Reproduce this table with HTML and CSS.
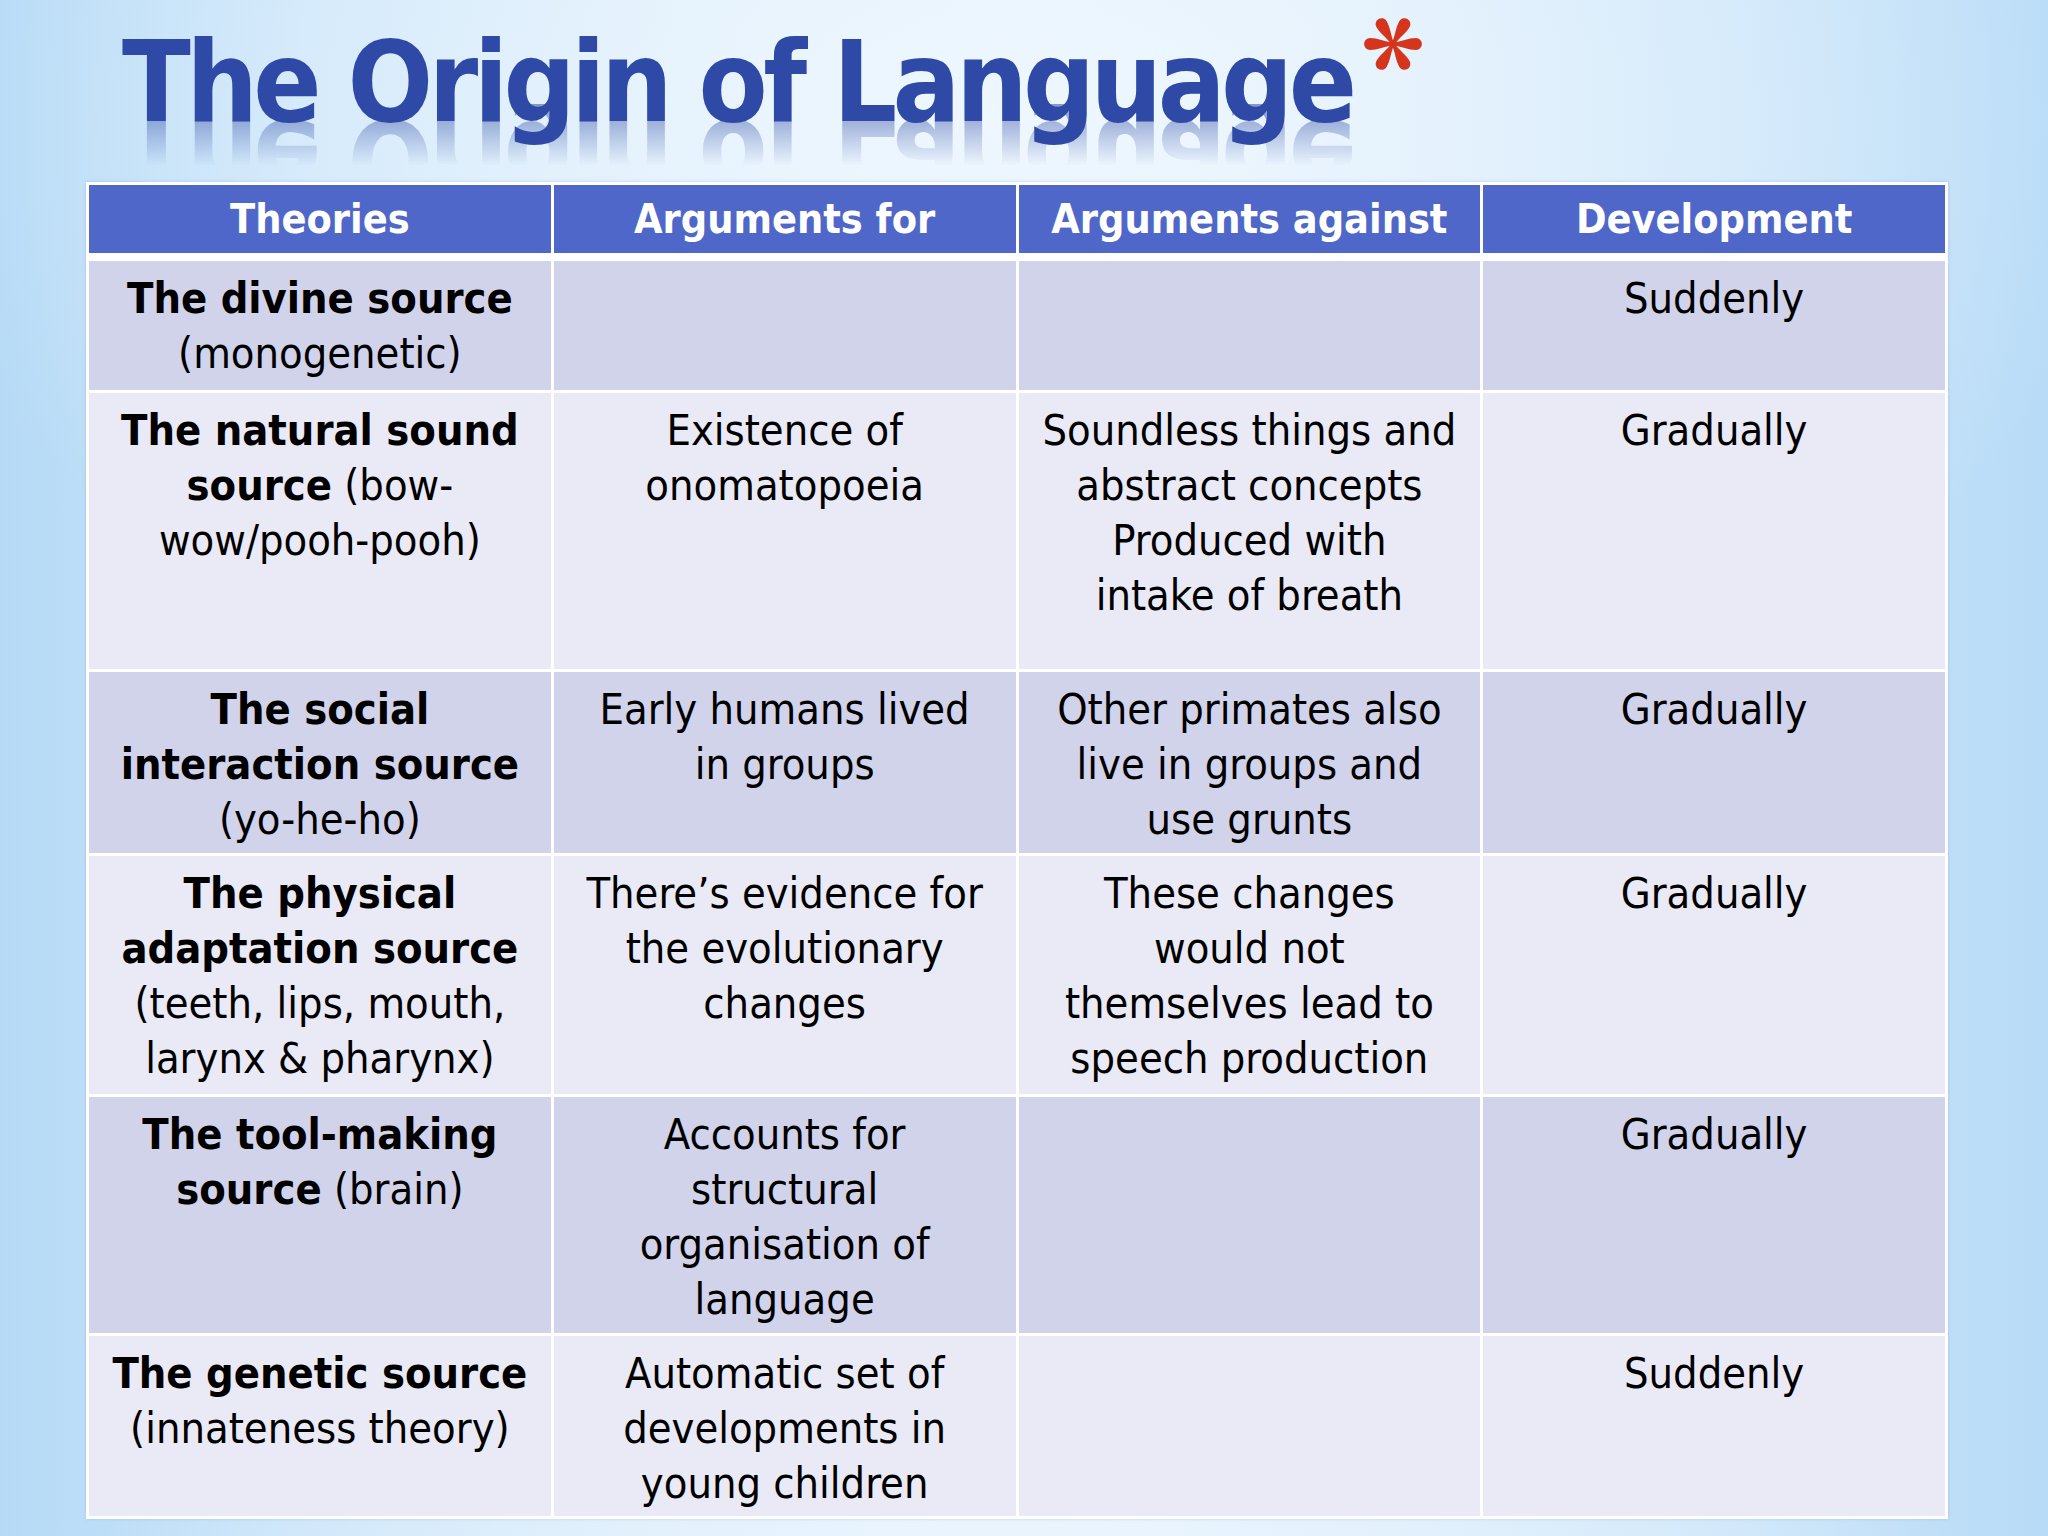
FILE: index.html
```html
<!DOCTYPE html>
<html lang="en">
<head>
<meta charset="utf-8">
<title>The Origin of Language</title>
<link rel="stylesheet" href="styles.css">
</head>
<body>
<div class="slide">
  <div class="title-row">
    <h1 class="title">The Origin of Language</h1>
    <svg class="asterisk" viewBox="-28 -28 56 56" aria-hidden="true">
      <g fill="#d4351c">
        <path id="arm" d="M0,-1.3 C8,-2 14,-5.5 21.5,-5.5 A5.5,5.5 0 0 1 21.5,5.5 C14,5.5 8,2 0,1.3 Z"/>
        <use href="#arm" transform="rotate(60)"/>
        <use href="#arm" transform="rotate(120)"/>
        <use href="#arm" transform="rotate(180)"/>
        <use href="#arm" transform="rotate(240)"/>
        <use href="#arm" transform="rotate(300)"/>
      </g>
    </svg>
  </div>

  <div class="table">
    <div class="cell head">Theories</div>
    <div class="cell head">Arguments for</div>
    <div class="cell head">Arguments against</div>
    <div class="cell head">Development</div>

    <div class="cell odd"><b>The divine source</b><br>(monogenetic)</div>
    <div class="cell odd"></div>
    <div class="cell odd"></div>
    <div class="cell odd">Suddenly</div>

    <div class="cell even"><b>The natural sound</b><br><b>source</b> (bow-<br>wow/pooh-pooh)</div>
    <div class="cell even">Existence of<br>onomatopoeia</div>
    <div class="cell even">Soundless things and<br>abstract concepts<br>Produced with<br>intake of breath</div>
    <div class="cell even">Gradually</div>

    <div class="cell odd"><b>The social</b><br><b>interaction source</b><br>(yo-he-ho)</div>
    <div class="cell odd">Early humans lived<br>in groups</div>
    <div class="cell odd">Other primates also<br>live in groups and<br>use grunts</div>
    <div class="cell odd">Gradually</div>

    <div class="cell even"><b>The physical</b><br><b>adaptation source</b><br>(teeth, lips, mouth,<br>larynx &amp; pharynx)</div>
    <div class="cell even">There’s evidence for<br>the evolutionary<br>changes</div>
    <div class="cell even">These changes<br>would not<br>themselves lead to<br>speech production</div>
    <div class="cell even">Gradually</div>

    <div class="cell odd"><b>The tool-making</b><br><b>source</b> (brain)</div>
    <div class="cell odd">Accounts for<br>structural<br>organisation of<br>language</div>
    <div class="cell odd"></div>
    <div class="cell odd">Gradually</div>

    <div class="cell even"><b>The genetic source</b><br>(innateness theory)</div>
    <div class="cell even">Automatic set of<br>developments in<br>young children</div>
    <div class="cell even"></div>
    <div class="cell even">Suddenly</div>
  </div>
</div>
</body>
</html>
```

FILE: styles.css
```css
html, body {
  margin: 0;
  padding: 0;
}

body {
  width: 2048px;
  height: 1536px;
  overflow: hidden;
}

.slide {
  width: 2048px;
  height: 1536px;
  box-sizing: border-box;
  font-family: "DejaVu Sans Condensed", "DejaVu Sans", sans-serif;
  background:
    radial-gradient(ellipse 55% 45% at 50% 8%, rgba(240, 248, 255, 0.85), rgba(240, 248, 255, 0) 100%),
    radial-gradient(ellipse 45% 30% at 50% 100%, rgba(235, 245, 254, 0.9), rgba(235, 245, 254, 0) 100%),
    linear-gradient(90deg, #b6daf6 0%, #cbe5f9 15%, #dcedfb 35%, #e2f0fc 50%, #dcedfb 65%, #cbe5f9 85%, #b8dbf7 100%);
}

.title-row {
  display: flex;
  align-items: flex-start;
  padding-left: 122px;
  height: 138px;
}

.title {
  margin: 26px 0 0 0;
  font-size: 112px;
  line-height: 112px;
  height: 112px;
  font-weight: bold;
  letter-spacing: -4.6px;
  color: #2f4aa6;
  white-space: nowrap;
  -webkit-box-reflect: below -34px linear-gradient(to bottom, rgba(255, 255, 255, 0) 45%, rgba(255, 255, 255, 0.55) 100%);
}

.asterisk {
  width: 60px;
  height: 60px;
  margin-top: 14px;
  margin-left: 11px;
  flex: none;
}

.table {
  margin: 44px 0 0 86px;
  width: 1862px;
  box-sizing: border-box;
  padding: 3px;
  background: #ffffff;
  display: grid;
  grid-template-columns: repeat(4, 1fr);
  grid-template-rows: 73px 129px 276px 181px 238px 236px 180px;
  gap: 3px;
  box-shadow: 0 0 3px rgba(120, 150, 190, 0.35);
}

.cell {
  box-sizing: border-box;
  text-align: center;
  white-space: nowrap;
  font-size: 43px;
  line-height: 55px;
  color: #000;
  padding-top: 10px;
}

.cell b {
  font-weight: bold;
}

.head {
  margin-bottom: 5px;
  padding-top: 0;
  background: #4f67c8;
  color: #ffffff;
  font-weight: bold;
  font-size: 41px;
  display: flex;
  align-items: center;
  justify-content: center;
}

.odd {
  background: #d1d3eb;
}

.even {
  background: #e9eaf5;
}
```
